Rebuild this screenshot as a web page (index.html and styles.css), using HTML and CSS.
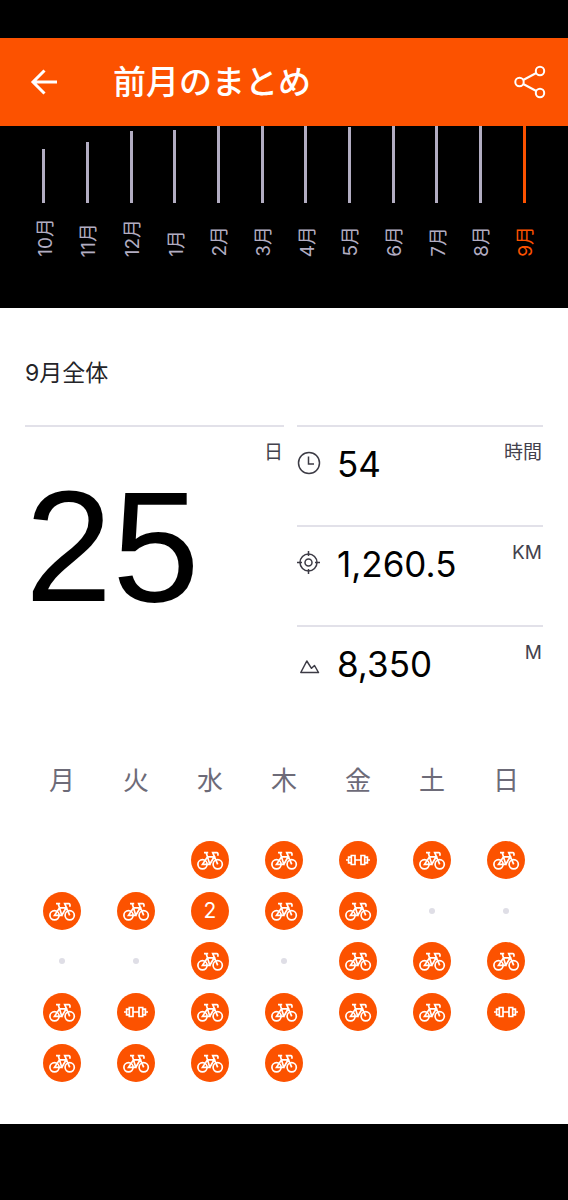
FILE: index.html
```html
<!DOCTYPE html>
<html lang="ja">
<head>
<meta charset="utf-8">
<meta name="viewport" content="width=device-width, initial-scale=1">
<title>前月のまとめ</title>
<link rel="stylesheet" href="styles.css">
</head>
<body>
<header class="bar">
  <button class="icon-btn" type="button" aria-label="戻る">
    <svg width="28" height="28" viewBox="0 0 28 28" fill="none" stroke="currentColor" stroke-width="3"><path d="M27 14H3M14.500 2.500 3 14l11.500 11.500"/></svg>
  </button>
  <h1 class="title">前月のまとめ</h1>
  <button class="icon-btn" type="button" aria-label="共有">
    <svg width="32" height="34" viewBox="0 0 32 34" fill="none" stroke="currentColor" stroke-width="2"><circle cx="5.500" cy="17" r="4.200"/><circle cx="26" cy="6" r="4.200"/><circle cx="26" cy="28" r="4.200"/><path d="M9.200 15 22.300 8M9.200 19l13.100 7"/></svg>
  </button>
</header>
<main>
  <section class="chart" id="chart" aria-label="月別"></section>
  <section class="summary">
    <h2 class="heading">9月全体</h2>
    <div class="stats">
      <div class="days"><span class="unit">日</span><strong class="big">25</strong></div>
      <div class="details">
        <div class="stat">
          <svg class="stat-icon" viewBox="0 0 24 24"><circle cx="12" cy="12" r="10.500"/><path d="M11.500 5.500V13H17"/></svg>
          <span class="value">54</span><span class="unit">時間</span>
        </div>
        <div class="stat">
          <svg class="stat-icon" viewBox="0 0 24 24"><circle cx="11.500" cy="11.500" r="8.500"/><circle cx="11.500" cy="11.500" r="3.500"/><path d="M11.500 0v5M11.500 18v5M0 11.500h5M18 11.500h5"/></svg>
          <span class="value">1,260.5</span><span class="unit">KM</span>
        </div>
        <div class="stat">
          <svg class="stat-icon" viewBox="0 0 24 24"><path d="M3.800 21.500 9.800 10 14.500 17.300 17.500 14.500 21.500 21.500Z" stroke-linejoin="round"/></svg>
          <span class="value">8,350</span><span class="unit">M</span>
        </div>
      </div>
    </div>
    <div class="weekdays"><span>月</span><span>火</span><span>水</span><span>木</span><span>金</span><span>土</span><span>日</span></div>
    <div class="calendar" id="calendar"></div>
  </section>
</main>
<svg class="defs" aria-hidden="true">
  <symbol id="bike" viewBox="0 0 38 38"><circle cx="11.500" cy="23.300" r="4.600"/><circle cx="26.700" cy="23.300" r="4.600"/><path d="M13 11.700h4.200M15.200 11.700l3.600 11.600h-7.300l5-7.500h6.700l-4.400 7.500M26.700 23.300l-5-11.600h4.200q1.700.300.800 3"/></symbol>
  <symbol id="dumbbell" viewBox="0 0 38 38"><path d="M7 19h2.300M28.700 19H31M16 19h6M11.800 16.200H9.600v5.600h2.200M26.200 16.200h2.200v5.600h-2.200M12.300 14.500H16v9h-3.700zM22 14.500h3.700v9H22z"/></symbol>
</svg>
<script src="script.js"></script>
</body>
</html>
```

FILE: styles.css
```css
* {
  box-sizing: border-box;
}

body {
  margin: 0;
  padding-top: 38px;
  background: #000;
  color: #000;
  font-family: Inter, "Noto Sans CJK JP", sans-serif;
}

h1,
h2 {
  margin: 0;
}

.bar {
  display: flex;
  align-items: center;
  height: 88px;
  padding: 0 22px 0 30px;
  background: #fc5200;
  color: #fff;
}

.icon-btn {
  display: flex;
  padding: 0;
  border: 0;
  background: none;
  color: inherit;
}

.title {
  flex: 1;
  padding-left: 55px;
  font-size: 33px;
  font-weight: 500;
  line-height: 48px;
}

.chart {
  display: grid;
  grid-template-columns: repeat(12, 1fr);
  height: 182px;
  padding: 0 22px;
  color: #b2adc2;
}

.month {
  display: grid;
  grid-template-rows: 77px 54px;
  justify-items: center;
  align-content: start;
  align-items: end;
}

.line {
  width: 3px;
  background: currentColor;
}

.month-name {
  padding-right: 4px;
  writing-mode: vertical-rl;
  text-orientation: sideways;
  transform: rotate(180deg);
  font-size: 19px;
  line-height: 24px;
}

.current {
  color: #fc5200;
}

.summary {
  padding: 48px 25px 36px;
  background: #fff;
}

.heading {
  color: #242428;
  font-size: 23px;
  font-weight: 400;
  line-height: 34px;
}

.stats {
  display: grid;
  grid-template-columns: 259fr 246fr;
  gap: 13px;
  margin-top: 35px;
}

.days,
.stat {
  border-top: 2px solid #e2e1e9;
}

.days {
  display: flex;
  flex-direction: column;
  padding-top: 12px;
}

.days .unit {
  align-self: flex-end;
}

.big {
  font-family: "Liberation Sans", Arial, sans-serif;
  font-size: 157px;
  font-weight: 400;
  line-height: 160px;
}

.stat {
  display: grid;
  grid-template-columns: 24px 1fr auto;
  align-items: start;
  column-gap: 16px;
  height: 100px;
  padding-top: 12px;
}

.stat-icon {
  width: 24px;
  height: 24px;
  margin-top: 12px;
  fill: none;
  stroke: #3c3b45;
  stroke-width: 1.500;
}

.value {
  font-size: 35px;
  line-height: 50px;
}

.unit {
  padding-right: 1px;
  color: #43424d;
  font-size: 19px;
  line-height: 28px;
}

.weekdays,
.calendar {
  display: grid;
  grid-template-columns: repeat(7, 1fr);
  justify-items: center;
}

.weekdays {
  margin-top: 36px;
  color: #6d6b78;
  font-size: 26px;
  line-height: 40px;
}

.calendar {
  grid-auto-rows: 1fr;
  align-items: center;
  height: 253px;
  margin-top: 34px;
}

.day {
  display: grid;
  place-items: center;
  width: 38px;
  height: 38px;
  border-radius: 50%;
  background: #fc5200;
  color: #fff;
  font-size: 21px;
}

.day svg {
  width: 38px;
  height: 38px;
  fill: none;
  stroke: currentColor;
  stroke-width: 1.700;
}

.rest {
  width: 6px;
  height: 6px;
  border-radius: 50%;
  background: #dfdee6;
}

.defs {
  display: none;
}
```

FILE: script.js
```js
const months = [
  ["10月", 54], ["11月", 61], ["12月", 72], ["1月", 73],
  ["2月", 77], ["3月", 77], ["4月", 77], ["5月", 76],
  ["6月", 77], ["7月", 77], ["8月", 77], ["9月", 77]
];

document.getElementById("chart").innerHTML = months.map(([name, height], i) =>
  `<div class="month${i === months.length - 1 ? " current" : ""}">` +
  `<span class="line" style="height:${height}px"></span>` +
  `<span class="month-name">${name}</span></div>`
).join("");

// b: ride, w: weights, 2: two activities, .: rest, _: outside the month
const days = "__bbwbb" + "bb2bb.." + "..b.bbb" + "bwbbbbw" + "bbbb___";
const icon = id => `<span class="day"><svg><use href="#${id}"/></svg></span>`;
const cells = {
  b: icon("bike"),
  w: icon("dumbbell"),
  2: '<span class="day">2</span>',
  ".": '<span class="rest"></span>',
  _: "<span></span>"
};

document.getElementById("calendar").innerHTML = [...days].map(d => cells[d]).join("");
```
